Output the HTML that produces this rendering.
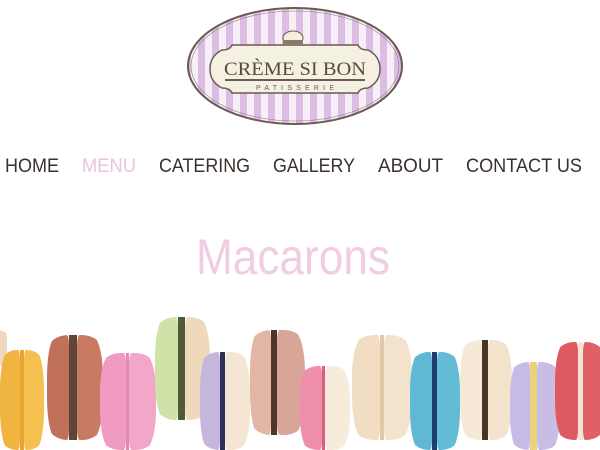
<!DOCTYPE html>
<html><head><meta charset="utf-8"><style>
html,body{margin:0;padding:0;background:#fff;width:600px;height:450px;overflow:hidden;position:relative;font-family:"Liberation Sans",sans-serif}
.m{position:absolute;display:flex;border-radius:38%/16%;overflow:hidden}
.m div{height:100%}
.l{border-radius:45% 10% 10% 45%/40% 10% 10% 40%}
.r{border-radius:10% 45% 45% 10%/10% 40% 40% 10%}
</style></head><body>
<svg width="600" height="300" style="position:absolute;left:0;top:0">
<defs>
<pattern id="st" width="14" height="10" patternUnits="userSpaceOnUse" x="2">
<rect width="14" height="10" fill="#f7eef8"/><rect width="7" height="10" fill="#dcbde3"/>
</pattern>
</defs>
<ellipse cx="295" cy="66" rx="107" ry="58" fill="url(#st)"/>
<ellipse cx="295" cy="66" rx="107" ry="58" fill="none" stroke="#6d5a52" stroke-width="2"/>
<ellipse cx="295" cy="66" rx="104" ry="55" fill="none" stroke="#8b7a80" stroke-width="0.6"/>
<path d="M222 50 Q230 50 232 45 L358 45 Q360 50 368 50 Q380 56 380 69 Q380 82 368 88 Q360 88 358 93 L232 93 Q230 88 222 88 Q210 82 210 69 Q210 56 222 50Z" fill="#f4f1e3" stroke="#6d5a52" stroke-width="1.5"/>
<ellipse cx="293" cy="38" rx="10" ry="7" fill="#f4eedc" stroke="#6d5a52" stroke-width="1"/>
<rect x="283" y="40" width="20" height="5" rx="2" fill="#8a7a6a"/>
<text x="295" y="75" text-anchor="middle" font-family="Liberation Serif,serif" font-size="19" fill="#5a4a40" textLength="142" lengthAdjust="spacingAndGlyphs">CRÈME SI BON</text>
<rect x="225" y="79" width="140" height="2" fill="#6d5a52"/>
<text x="295" y="90" text-anchor="middle" font-size="7" fill="#6d5a52" textLength="78" lengthAdjust="spacing">PATISSERIE</text>
<g font-size="19" fill="#3a302c">
<text x="5" y="172" textLength="54" lengthAdjust="spacingAndGlyphs">HOME</text>
<text x="82" y="172" textLength="54" lengthAdjust="spacingAndGlyphs" fill="#ebc3dd">MENU</text>
<text x="159" y="172" textLength="91" lengthAdjust="spacingAndGlyphs">CATERING</text>
<text x="273" y="172" textLength="82" lengthAdjust="spacingAndGlyphs">GALLERY</text>
<text x="378" y="172" textLength="65" lengthAdjust="spacingAndGlyphs">ABOUT</text>
<text x="466" y="172" textLength="116" lengthAdjust="spacingAndGlyphs">CONTACT US</text>
</g>
<text x="196" y="274" font-size="50" fill="#f1cde3" textLength="194" lengthAdjust="spacingAndGlyphs">Macarons</text>
</svg>

<div class="m" style="left:-20px;top:330px;width:27px;height:36px"><div style="width:27px;background:#ecd9c0"></div></div>
<div class="m" style="left:0;top:350px;width:44px;height:100px"><div class="l" style="width:20px;background:#f0b440"></div><div style="width:4px;background:#e7a530"></div><div class="r" style="width:20px;background:#f5c050"></div></div>
<div class="m" style="left:47px;top:335px;width:56px;height:105px"><div class="l" style="width:22px;background:#c1705a"></div><div style="width:8px;background:#5f4538"></div><div class="r" style="width:26px;background:#c87a62"></div></div>
<div class="m" style="left:100px;top:353px;width:56px;height:97px"><div class="l" style="width:26px;background:#ef9cc0"></div><div style="width:3px;background:#e688b0"></div><div class="r" style="width:27px;background:#f2a6c8"></div></div>
<div class="m" style="left:155px;top:317px;width:55px;height:103px"><div class="l" style="width:23px;background:#cfe2a8"></div><div style="width:7px;background:#4f5a3a"></div><div class="r" style="width:25px;background:#efd8bc"></div></div>
<div class="m" style="left:200px;top:352px;width:50px;height:98px"><div class="l" style="width:20px;background:#c7b6dc"></div><div style="width:5px;background:#2e2f5a"></div><div class="r" style="width:25px;background:#f4e6d2"></div></div>
<div class="m" style="left:250px;top:330px;width:55px;height:105px"><div class="l" style="width:21px;background:#e2b5a5"></div><div style="width:6px;background:#4e3630"></div><div class="r" style="width:28px;background:#d8a598"></div></div>
<div class="m" style="left:300px;top:366px;width:50px;height:84px"><div class="l" style="width:22px;background:#ef8eaa"></div><div style="width:3px;background:#d86080"></div><div class="r" style="width:25px;background:#f7ebdc"></div></div>
<div class="m" style="left:352px;top:335px;width:60px;height:105px"><div class="l" style="width:28px;background:#f0ddc4"></div><div style="width:4px;background:#e0c8a8"></div><div class="r" style="width:28px;background:#f3e2cc"></div></div>
<div class="m" style="left:410px;top:352px;width:50px;height:98px"><div class="l" style="width:22px;background:#5fb8d4"></div><div style="width:5px;background:#1f3d70"></div><div class="r" style="width:23px;background:#62bcd6"></div></div>
<div class="m" style="left:460px;top:340px;width:52px;height:100px"><div class="l" style="width:22px;background:#f6e9d6"></div><div style="width:6px;background:#4b3326"></div><div class="r" style="width:24px;background:#f3e2cc"></div></div>
<div class="m" style="left:510px;top:362px;width:50px;height:88px"><div class="l" style="width:20px;background:#c8bae6"></div><div style="width:7px;background:#e9d37a"></div><div class="r" style="width:23px;background:#c9bde6"></div></div>
<div class="m" style="left:555px;top:342px;width:50px;height:98px"><div class="l" style="width:23px;background:#df5a60"></div><div style="width:5px;background:#f3e4d8"></div><div class="r" style="width:22px;background:#e06068"></div></div>
</body></html>
